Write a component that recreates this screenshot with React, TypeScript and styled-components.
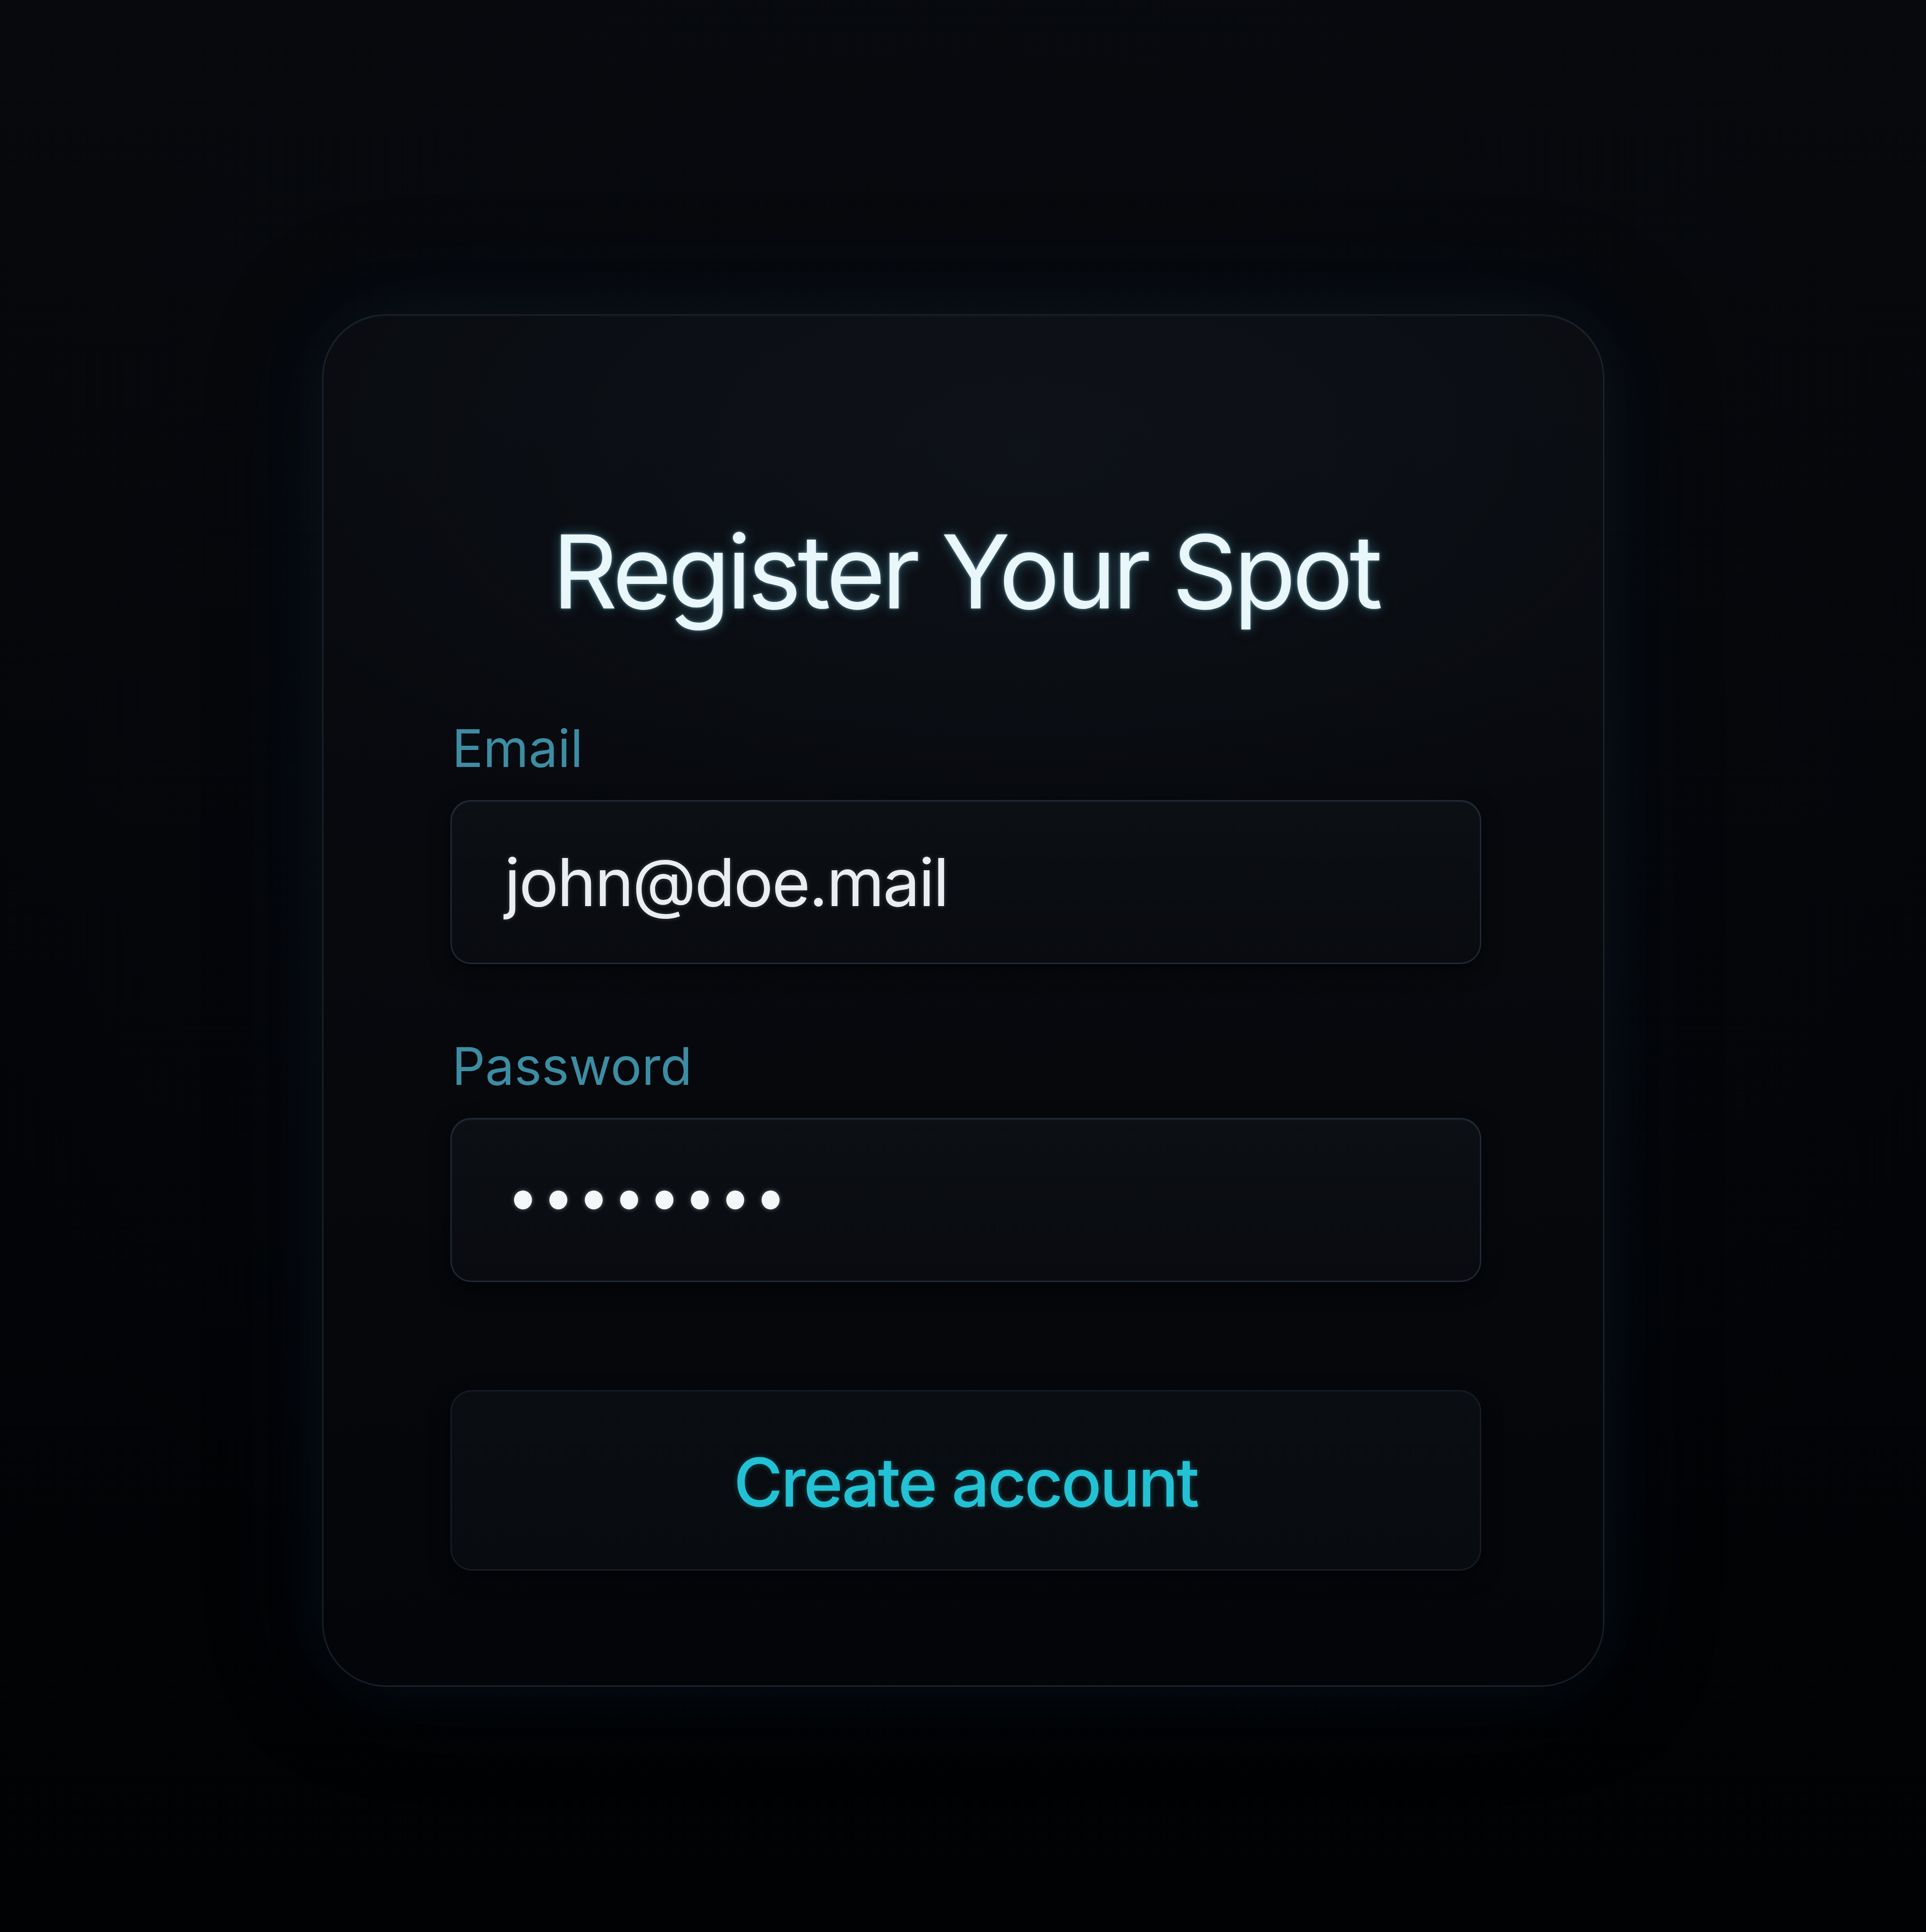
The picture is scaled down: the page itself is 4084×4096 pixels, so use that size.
import React from "react";
import styled, { createGlobalStyle } from "styled-components";

const GlobalStyle = createGlobalStyle`
  html, body {
    margin: 0;
    padding: 0;
    background: #030407;
  }
  * { box-sizing: border-box; }
`;

const Page = styled.div`
  width: 4084px;
  min-height: 4096px;
  display: flex;
  justify-content: center;
  align-items: flex-start;
  padding-top: 666px;
  background:
    radial-gradient(ellipse 2300px 2100px at 50% 40%, rgba(18, 24, 34, 0.5) 0%, rgba(8, 11, 16, 0.3) 50%, rgba(0, 0, 0, 0) 100%),
    linear-gradient(180deg, #07090d 0%, #040509 45%, #010203 100%);
  font-family: Inter, "Noto Sans", "Liberation Sans", sans-serif;
`;

const Card = styled.form`
  width: 2719px;
  height: 2910px;
  padding: 413px 258px 0 269px;
  display: flex;
  flex-direction: column;
  border-radius: 135px;
  border: 3px solid rgba(40, 52, 66, 0.55);
  background:
    radial-gradient(ellipse 1800px 900px at 55% 10%, rgba(20, 26, 34, 0.5) 0%, rgba(0, 0, 0, 0) 100%),
    linear-gradient(180deg, #090b10 0%, #06080c 60%, #040509 100%);
  box-shadow:
    0 0 120px rgba(30, 50, 70, 0.18),
    0 0 300px rgba(20, 35, 55, 0.22),
    inset 0 2px 0 rgba(70, 90, 110, 0.08);
`;

const Title = styled.h1`
  margin: 0;
  font-family: Inter, "Noto Sans", sans-serif;
  font-size: 216px;
  font-weight: 400;
  line-height: 1.2;
  letter-spacing: -8px;
  text-align: center;
  color: #e9f6fa;
  text-shadow:
    0 0 6px rgba(170, 230, 245, 0.55),
    0 0 28px rgba(90, 190, 220, 0.35);
`;

const Field = styled.div<{ $top: number }>`
  display: flex;
  flex-direction: column;
  gap: 44px;
  margin-top: ${(p) => p.$top}px;
`;

const Label = styled.label`
  font-family: Inter, "Noto Sans", sans-serif;
  font-size: 110px;
  font-weight: 400;
  line-height: 1.2;
  color: #3c8da3;
  padding-left: 4px;
`;

const InputBox = styled.div`
  height: 348px;
  width: 100%;
  display: flex;
  align-items: center;
  padding-left: 112px;
  border-radius: 44px;
  border: 3px solid rgba(46, 60, 76, 0.6);
  background: linear-gradient(180deg, #0c0f14 0%, #090b10 100%);
  box-shadow:
    0 14px 40px rgba(0, 0, 0, 0.55),
    inset 0 2px 0 rgba(90, 110, 130, 0.12);
`;

const InputText = styled.span`
  font-family: Inter, "Noto Sans", sans-serif;
  font-size: 140px;
  font-weight: 400;
  letter-spacing: -3px;
  color: #ebeef0;
  text-shadow: 0 0 10px rgba(200, 230, 240, 0.25);
`;

const Dots = styled.div`
  display: flex;
  gap: 37px;
  padding-left: 20px;
`;

const Dot = styled.span`
  width: 38px;
  height: 40px;
  border-radius: 50%;
  background: #f4f6f8;
  box-shadow: 0 0 10px rgba(220, 240, 255, 0.45);
`;

const Button = styled.button`
  margin-top: 229px;
  height: 383px;
  width: 100%;
  border-radius: 46px;
  border: 3px solid rgba(32, 42, 54, 0.55);
  background: linear-gradient(180deg, #0a0d12 0%, #080b0f 100%);
  box-shadow: 0 14px 40px rgba(0, 0, 0, 0.5);
  font-family: Inter, "Noto Sans", sans-serif;
  font-size: 142px;
  font-weight: 500;
  letter-spacing: -4px;
  color: #22c2d4;
  text-shadow: 0 0 12px rgba(30, 200, 220, 0.35);
  padding: 0;
  padding-top: 6px;
  cursor: pointer;
`;

export default function App() {
  return (
    <>
      <GlobalStyle />
      <Page>
        <Card onSubmit={(e) => e.preventDefault()}>
          <Title>Register Your Spot</Title>
          <Field $top={179}>
            <Label>Email</Label>
            <InputBox>
              <InputText>john@doe.mail</InputText>
            </InputBox>
          </Field>
          <Field $top={150}>
            <Label>Password</Label>
            <InputBox>
              <Dots>
                {Array.from({ length: 8 }).map((_, i) => (
                  <Dot key={i} />
                ))}
              </Dots>
            </InputBox>
          </Field>
          <Button type="submit">Create account</Button>
        </Card>
      </Page>
    </>
  );
}
